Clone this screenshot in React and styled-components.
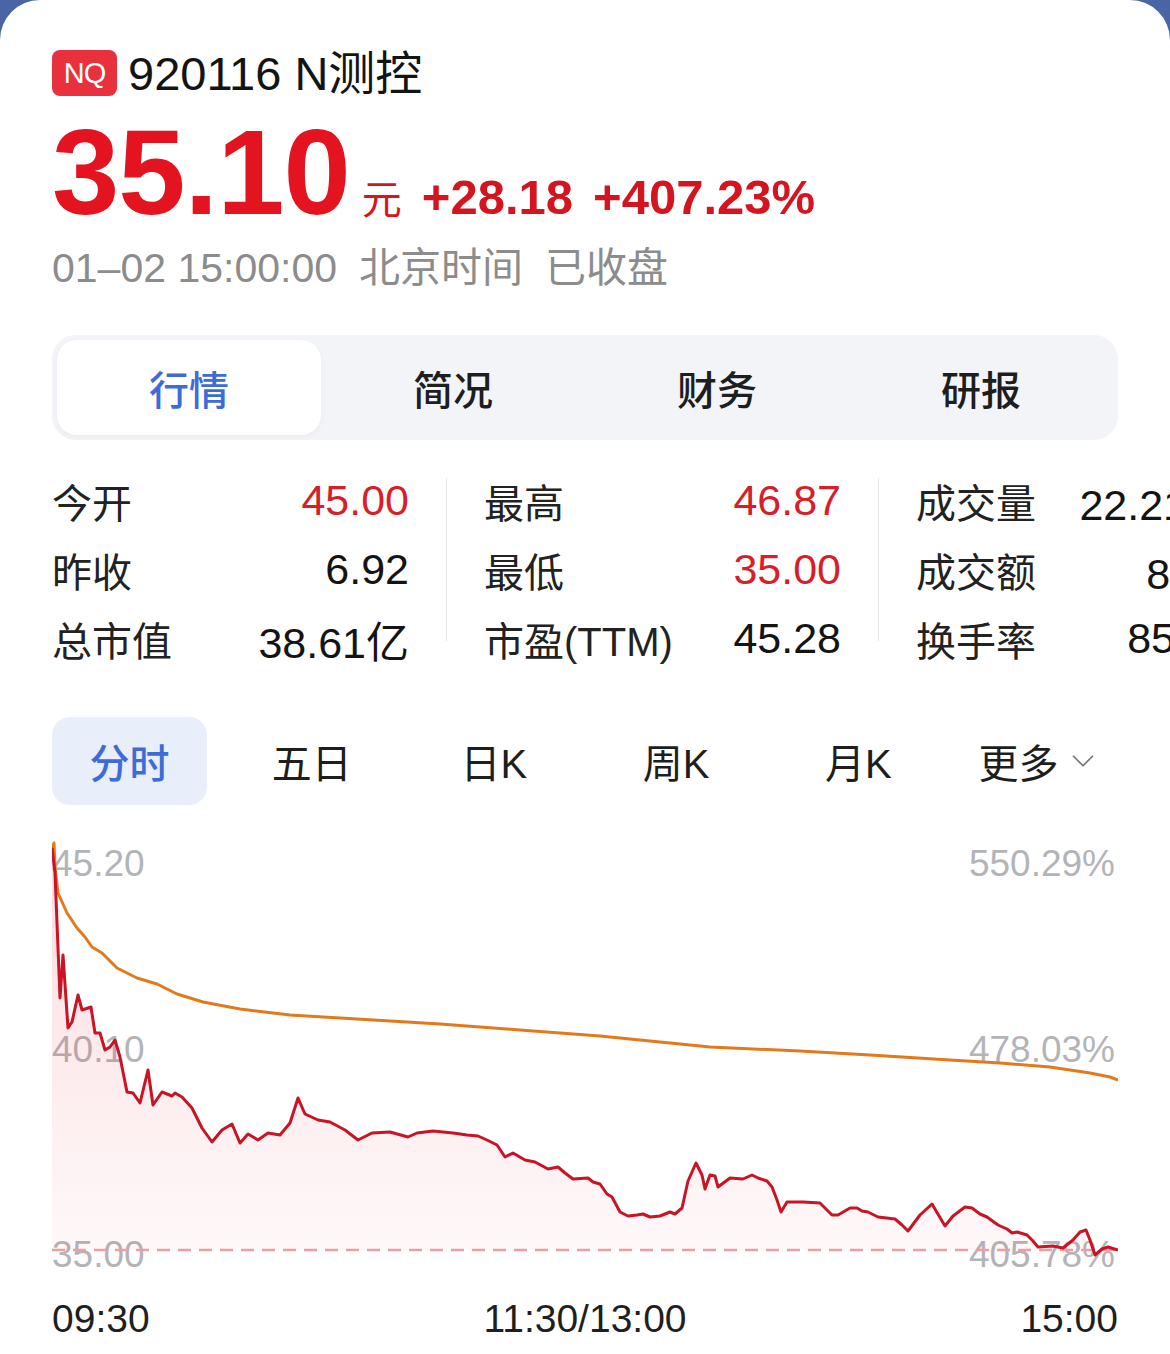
import React from "react";
import styled, { createGlobalStyle } from "styled-components";
import { ChevronDown } from "lucide-react";

const GlobalStyle = createGlobalStyle`
  html, body {
    margin: 0;
    padding: 0;
    background: #4a65a3;
  }
  body {
    font-family: "Liberation Sans", "Noto Sans CJK SC", sans-serif;
    -webkit-font-smoothing: antialiased;
  }
`;

const Card = styled.div`
  width: 1170px;
  height: 1354px;
  box-sizing: border-box;
  background: #fff;
  border-radius: 40px 40px 0 0;
  padding: 50px 52px 0 52px;
  overflow: hidden;
`;

const TitleRow = styled.div`
  display: flex;
  align-items: center;
  height: 46px;
  gap: 11px;
`;

const Badge = styled.span`
  display: flex;
  align-items: center;
  justify-content: center;
  width: 65px;
  height: 46px;
  border-radius: 8px;
  background: #e8313d;
  color: #fff;
  font-size: 29px;
  letter-spacing: -1px;
`;

const Title = styled.span`
  font-size: 47px;
  color: #141414;
  line-height: 1;
`;

const PriceRow = styled.div`
  display: flex;
  align-items: baseline;
  margin-top: 16px;
  height: 116px;
  color: #e3141f;
`;

const Price = styled.span`
  font-size: 121px;
  font-weight: bold;
  line-height: 1;
  letter-spacing: -1px;
`;

const Unit = styled.span`
  font-size: 40px;
  margin-left: 12px;
  color: #d8141f;
`;

const Change = styled.span`
  font-size: 49px;
  font-weight: bold;
  margin-left: 20px;
  color: #d4141f;
`;

const DateLine = styled.div`
  margin-top: 20px;
  font-size: 41px;
  line-height: 1;
  color: #8c8c8c;
  display: flex;
  gap: 22px;
`;

const TabBar = styled.div`
  margin-top: 46px;
  height: 105px;
  box-sizing: border-box;
  padding: 5px;
  background: #f3f4f8;
  border-radius: 24px;
  display: grid;
  grid-template-columns: repeat(4, 1fr);
`;

const Tab = styled.div`
  display: flex;
  align-items: center;
  justify-content: center;
  font-size: 40px;
  font-weight: 500;
  border-radius: 20px;
  color: ${(p) => (p.$active ? "#3d6cd8" : "#1e1e1e")};
  background: ${(p) => (p.$active ? "#fff" : "transparent")};
  box-shadow: ${(p) => (p.$active ? "0 2px 6px rgba(0,0,0,0.04)" : "none")};
`;

const Stats = styled.div`
  margin-top: 26px;
  display: flex;
  gap: 37px;
  width: 1300px;
`;

const StatCol = styled.div`
  width: 357px;
  flex-shrink: 0;
  display: flex;
  flex-direction: column;
`;

const StatRow = styled.div`
  height: 69px;
  display: flex;
  align-items: center;
  justify-content: space-between;
  white-space: nowrap;
`;

const StatLabel = styled.span`
  font-size: 40px;
  color: #222;
`;

const StatValue = styled.span`
  font-size: 43px;
  color: ${(p) => (p.$red ? "#d81e29" : "#141414")};
`;

const Divider = styled.div`
  width: 1px;
  flex-shrink: 0;
  background: #e8e8ea;
  margin: 12px 0 32px;
`;

const Periods = styled.div`
  margin-top: 44px;
  height: 88px;
  display: flex;
  justify-content: space-between;
`;

const Period = styled.div`
  width: 155px;
  display: flex;
  align-items: center;
  justify-content: center;
  gap: 6px;
  font-size: 40px;
  border-radius: 18px;
  white-space: nowrap;
  color: ${(p) => (p.$active ? "#3d6cd8" : "#1e1e1e")};
  background: ${(p) => (p.$active ? "#e9eefb" : "transparent")};
  font-weight: ${(p) => (p.$active ? 500 : 400)};
`;

const ChartBox = styled.div`
  margin-top: 25px;
  height: 450px;
`;

const TimeAxis = styled.div`
  margin-top: 19px;
  display: flex;
  justify-content: space-between;
  font-size: 39px;
  line-height: 1;
  color: #1f1f1f;
`;

const price = [
  [52, 848], [55, 873], [60, 998], [63, 955], [68, 1028], [72, 1022], [78, 995],
  [82, 1010], [91, 1007], [95, 1033], [100, 1033], [105, 1050], [110, 1047],
  [115, 1040], [120, 1057], [127, 1092], [133, 1093], [140, 1103], [148, 1070],
  [153, 1105], [162, 1092], [172, 1096], [175, 1093], [182, 1097], [192, 1108],
  [202, 1128], [212, 1142], [222, 1130], [232, 1124], [240, 1143], [248, 1134],
  [258, 1140], [268, 1133], [280, 1135], [290, 1123], [298, 1098], [305, 1114],
  [318, 1120], [330, 1122], [345, 1130], [358, 1140], [372, 1133], [390, 1132],
  [408, 1137], [417, 1133], [433, 1131], [453, 1133], [467, 1135], [478, 1136],
  [487, 1140], [497, 1145], [505, 1157], [513, 1153], [525, 1160], [535, 1162],
  [548, 1169], [558, 1167], [565, 1173], [573, 1179], [588, 1178], [593, 1182],
  [600, 1184], [607, 1194], [612, 1197], [620, 1212], [628, 1216], [637, 1215],
  [643, 1214], [650, 1217], [660, 1216], [670, 1212], [675, 1214], [682, 1208],
  [688, 1181], [696, 1163], [702, 1175], [705, 1189], [710, 1175], [715, 1176],
  [718, 1187], [730, 1178], [743, 1179], [752, 1175], [758, 1178], [767, 1181],
  [772, 1187], [777, 1200], [781, 1212], [787, 1202], [803, 1202], [820, 1203],
  [832, 1215], [838, 1215], [850, 1208], [857, 1208], [862, 1211], [868, 1212],
  [878, 1217], [895, 1219], [902, 1225], [908, 1231], [920, 1215], [932, 1204],
  [945, 1226], [953, 1216], [965, 1207], [972, 1208], [980, 1214], [987, 1217],
  [998, 1225], [1007, 1229], [1012, 1233], [1017, 1232], [1027, 1235],
  [1033, 1241], [1038, 1247], [1053, 1246], [1063, 1248], [1073, 1240],
  [1080, 1232], [1086, 1230], [1090, 1240], [1095, 1255], [1102, 1249],
  [1108, 1247], [1118, 1250],
];

const average = [
  [52, 848], [54, 843], [55, 867], [58, 893], [67, 913], [77, 928], [85, 937],
  [92, 947], [102, 953], [117, 968], [137, 978], [157, 984], [177, 994],
  [203, 1002], [240, 1009], [290, 1015], [357, 1019], [440, 1024], [520, 1030],
  [600, 1036], [660, 1042], [710, 1047], [800, 1051], [870, 1055], [950, 1060],
  [1000, 1063], [1050, 1067], [1090, 1073], [1110, 1077], [1118, 1080],
];

const toSvg = (pts) => pts.map(([x, y]) => `${x - 52},${y - 830}`).join(" ");

const Chart = () => {
  const line = toSvg(price);
  const area = `M0,420 L${line.replace(/ /g, " L")} L1066,420 Z`;
  const label = { fontFamily: "Liberation Sans, sans-serif", fontSize: 37, fill: "#b4b4b8" };
  return (
    <svg width="1066" height="450" viewBox="0 0 1066 450">
      <defs>
        <linearGradient id="fill" x1="0" y1="0" x2="0" y2="1">
          <stop offset="0" stopColor="#e8283a" stopOpacity="0.16" />
          <stop offset="1" stopColor="#e8283a" stopOpacity="0.03" />
        </linearGradient>
      </defs>
      <text x="0" y="46" {...label}>45.20</text>
      <text x="0" y="232" {...label}>40.10</text>
      <text x="0" y="437" {...label}>35.00</text>
      <text x="1063" y="46" textAnchor="end" {...label}>550.29%</text>
      <text x="1063" y="232" textAnchor="end" {...label}>478.03%</text>
      <text x="1063" y="437" textAnchor="end" {...label}>405.78%</text>
      <path d={area} fill="url(#fill)" />
      <line x1="0" y1="420" x2="1066" y2="420" stroke="#ef9ca5" strokeWidth="2.5" strokeDasharray="13 8" />
      <polyline points={toSvg(average)} fill="none" stroke="#e27a1c" strokeWidth="3" strokeLinejoin="round" />
      <polyline points={line} fill="none" stroke="#c81424" strokeWidth="3" strokeLinejoin="round" />
    </svg>
  );
};

const stats = [
  [["今开", "45.00", true], ["昨收", "6.92"], ["总市值", "38.61亿"]],
  [["最高", "46.87", true], ["最低", "35.00", true], ["市盈(TTM)", "45.28"]],
  [["成交量", "22.21万手"], ["成交额", "8.88亿"], ["换手率", "85.41%"]],
];

const App = () => (
  <>
    <GlobalStyle />
    <Card>
      <TitleRow>
        <Badge>NQ</Badge>
        <Title>920116 N测控</Title>
      </TitleRow>
      <PriceRow>
        <Price>35.10</Price>
        <Unit>元</Unit>
        <Change>+28.18</Change>
        <Change>+407.23%</Change>
      </PriceRow>
      <DateLine>
        <span>01–02 15:00:00</span>
        <span>北京时间</span>
        <span>已收盘</span>
      </DateLine>
      <TabBar>
        <Tab $active>行情</Tab>
        <Tab>简况</Tab>
        <Tab>财务</Tab>
        <Tab>研报</Tab>
      </TabBar>
      <Stats>
        {stats.map((col, i) => (
          <React.Fragment key={i}>
            {i > 0 && <Divider />}
            <StatCol>
              {col.map(([l, v, red]) => (
                <StatRow key={l}>
                  <StatLabel>{l}</StatLabel>
                  <StatValue $red={red}>{v}</StatValue>
                </StatRow>
              ))}
            </StatCol>
          </React.Fragment>
        ))}
      </Stats>
      <Periods>
        <Period $active>分时</Period>
        <Period>五日</Period>
        <Period>日K</Period>
        <Period>周K</Period>
        <Period>月K</Period>
        <Period>
          更多
          <ChevronDown size={38} strokeWidth={1.1} color="#777" />
        </Period>
      </Periods>
      <ChartBox>
        <Chart />
      </ChartBox>
      <TimeAxis>
        <span>09:30</span>
        <span>11:30/13:00</span>
        <span>15:00</span>
      </TimeAxis>
    </Card>
  </>
);

export default App;
